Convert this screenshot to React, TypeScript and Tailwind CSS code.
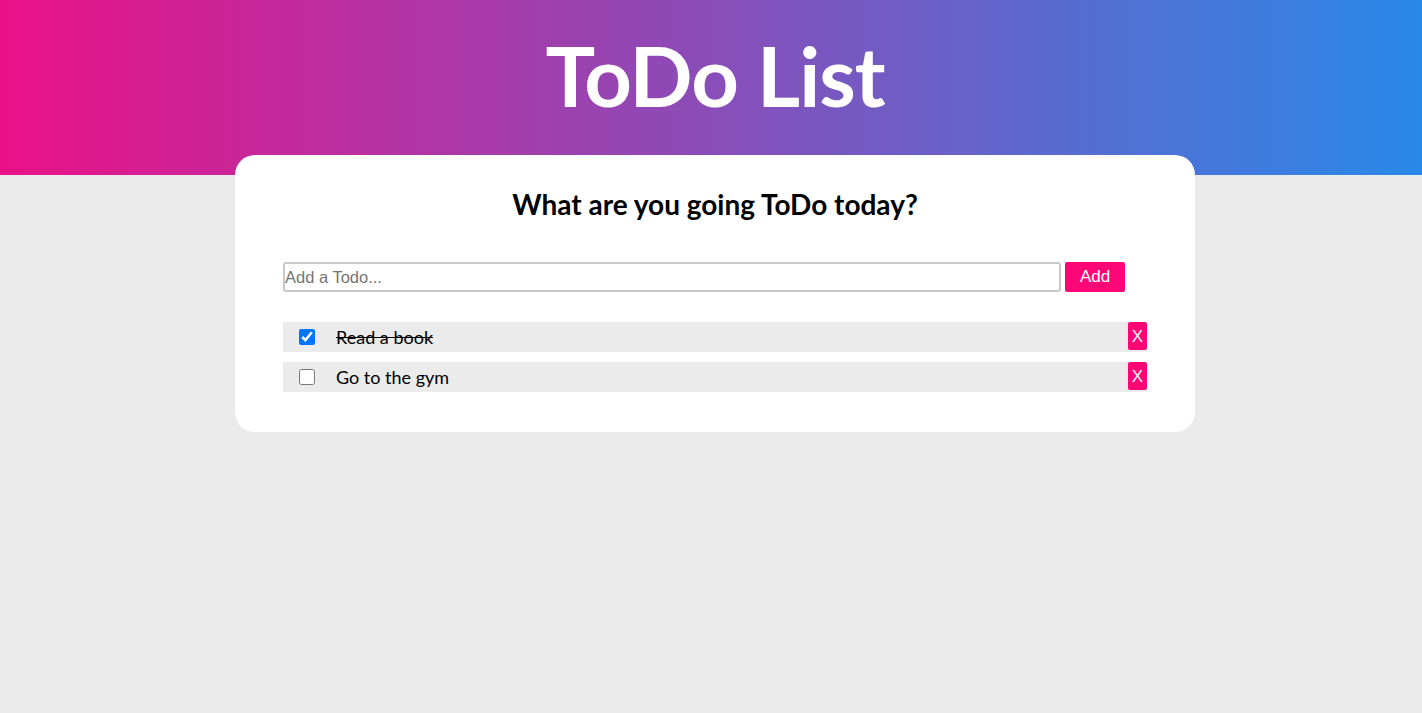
import { useState } from "react";

type Todo = { id: number; text: string; done: boolean };

const App = () => {
  const [todos, setTodos] = useState<Todo[]>([
    { id: 1, text: "Read a book", done: true },
    { id: 2, text: "Go to the gym", done: false },
  ]);
  const [value, setValue] = useState("");

  const toggle = (id: number) =>
    setTodos((t) => t.map((x) => (x.id === id ? { ...x, done: !x.done } : x)));
  const remove = (id: number) => setTodos((t) => t.filter((x) => x.id !== id));
  const add = () => {
    if (!value.trim()) return;
    setTodos((t) => [...t, { id: Date.now(), text: value, done: false }]);
    setValue("");
  };

  return (
    <div className="min-h-[713px] bg-[#ebebeb] font-['Lato',sans-serif]">
      {/* Header */}
      <div className="h-[175px] bg-linear-to-r/srgb from-[#ea1188] to-[#2889e8] flex justify-center pt-[27px] pl-2">
        <h1 className="text-white font-bold text-[83px] leading-[96px] tracking-[-1px]">
          ToDo List
        </h1>
      </div>
      {/* Card */}
      <div className="pl-2">
        <div className="w-[960px] mx-auto -mt-5 bg-white rounded-[20px] px-12 pt-[33px] pb-10">
          <h2 className="text-center font-bold text-[28px] leading-[32px] text-black">
            What are you going ToDo today?
          </h2>
          <div className="flex items-center gap-1 mt-[42px] pr-[22px]">
            <input
              value={value}
              onChange={(e) => setValue(e.target.value)}
              placeholder="Add a Todo..."
              className="flex-1 h-[30px] border-2 border-[#c8c8c8] rounded-[3px] px-0 text-[16.5px] font-['Liberation_Sans',sans-serif] placeholder:text-[#757575] outline-none"
            />
            <button
              onClick={add}
              className="w-[60px] h-[30px] bg-[#ff0677] text-white text-[17px] rounded-[2px] font-['Liberation_Sans',sans-serif]"
            >
              Add
            </button>
          </div>
          <div className="flex flex-col gap-[10px] mt-[30px]">
            {todos.map((todo) => (
              <div key={todo.id} className="flex items-start h-[30px] bg-[#ebebeb]">
                <div className="flex items-center h-[30px] flex-1">
                  <input
                    type="checkbox"
                    checked={todo.done}
                    onChange={() => toggle(todo.id)}
                    className="w-4 h-4 ml-4 mr-[21px] accent-[#0075ff]"
                  />
                  <span
                    className={`text-[18px] text-black ${todo.done ? "line-through" : ""}`}
                  >
                    {todo.text}
                  </span>
                </div>
                <button
                  onClick={() => remove(todo.id)}
                  className="w-[19px] h-[28px] bg-[#ff0677] text-white text-[17px] rounded-[2px] font-['Liberation_Sans',sans-serif] leading-none"
                >
                  X
                </button>
              </div>
            ))}
          </div>
        </div>
      </div>
    </div>
  );
};

export default App;
